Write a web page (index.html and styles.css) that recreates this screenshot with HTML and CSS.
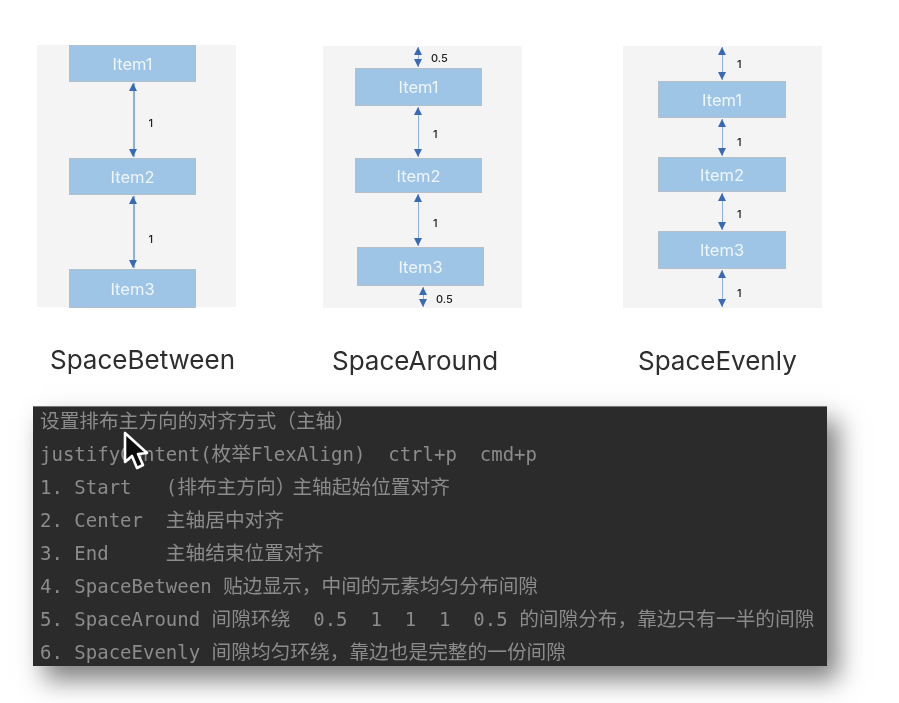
FILE: index.html
```html
<!DOCTYPE html>
<html lang="zh">
<head>
<meta charset="utf-8">
<title>justifyContent</title>
<link rel="stylesheet" href="styles.css">
</head>
<body>
<main class="page">
  <section class="diagrams">
    <figure class="col col-between">
      <div class="panel">
        <div class="item h37">Item1</div>
        <div class="gap h76"><span class="arrow"></span><span class="num shift-6">1</span></div>
        <div class="item h37">Item2</div>
        <div class="gap h74"><span class="arrow"></span><span class="num shift-14">1</span></div>
        <div class="item h39">Item3</div>
      </div>
      <figcaption class="title">SpaceBetween</figcaption>
    </figure>
    <figure class="col col-around">
      <div class="panel">
        <div class="gap h22"><span class="arrow"></span><span class="num half shift-2">0.5</span></div>
        <div class="item h38">Item1</div>
        <div class="gap h52"><span class="arrow"></span><span class="num shift-4">1</span></div>
        <div class="item h35">Item2</div>
        <div class="gap h54"><span class="arrow"></span><span class="num shift-6">1</span></div>
        <div class="item h39 nudged">Item3</div>
        <div class="gap h22 nudged-more"><span class="arrow"></span><span class="num half shift-4">0.5</span></div>
      </div>
      <figcaption class="title">SpaceAround</figcaption>
    </figure>
    <figure class="col col-evenly">
      <div class="panel">
        <div class="gap h35"><span class="arrow"></span><span class="num">1</span></div>
        <div class="item h37">Item1</div>
        <div class="gap h39"><span class="arrow"></span><span class="num shift-8">1</span></div>
        <div class="item h35">Item2</div>
        <div class="gap h39"><span class="arrow"></span><span class="num shift-4">1</span></div>
        <div class="item h38">Item3</div>
        <div class="gap h39"><span class="arrow"></span><span class="num shift-8">1</span></div>
      </div>
      <figcaption class="title">SpaceEvenly</figcaption>
    </figure>
  </section>

  <section class="code">
    <div class="line"><span class="zh">设置排布主方向的对齐方式（主轴）</span></div>
    <div class="line">justifyContent(<span class="zh">枚举</span>FlexAlign)  ctrl+p  cmd+p</div>
    <div class="line">1. Start   (<span class="zh">排布主方向<span class="tight">）</span>主轴起始位置对齐</span></div>
    <div class="line">2. Center  <span class="zh">主轴居中对齐</span></div>
    <div class="line">3. End     <span class="zh">主轴结束位置对齐</span></div>
    <div class="line">4. SpaceBetween <span class="zh">贴边显示，中间的元素均匀分布间隙</span></div>
    <div class="line">5. SpaceAround <span class="zh">间隙环绕</span>  0.5  1  1  1  0.5 <span class="zh">的间隙分布，靠边只有一半的间隙</span></div>
    <div class="line">6. SpaceEvenly <span class="zh">间隙均匀环绕，靠边也是完整的一份间隙</span></div>
    <svg class="cursor" viewBox="0 0 26 40" width="26" height="40" aria-hidden="true">
      <path d="M2 2 L2 31 L9 25 L14 37 L20 34 L15 23 L24 22 Z" fill="#0c0c0c" stroke="#fff" stroke-width="2.6" stroke-linejoin="round"/>
    </svg>
  </section>
</main>
</body>
</html>
```
FILE: styles.css
```css
html, body {
  margin: 0;
  background: #fff;
}

.page {
  width: 899px;
  height: 703px;
  overflow: hidden;
  box-sizing: border-box;
  padding: 45px 0 0 33px;
  filter: blur(0.5px);
}

.diagrams {
  display: flex;
  padding-left: 4px;
}

.col {
  margin: 0;
  width: 199px;
  flex: none;
}

.col-around {
  margin-left: 87px;
  padding-top: 1px;
}

.col-evenly {
  margin-left: 101px;
  padding-top: 1px;
}

.panel {
  display: flex;
  flex-direction: column;
  height: 262px;
  background: #f4f4f4;
}

.item {
  box-sizing: border-box;
  width: 127px;
  margin-left: 32px;
  display: flex;
  align-items: center;
  justify-content: center;
  flex: none;
  background: #9fc5e6;
  border: 1px solid #b6bfc6;
  color: #eef6fc;
  font: 16.5px "Inter", "Noto Sans", sans-serif;
}

.col-evenly .item {
  margin-left: 35px;
  width: 128px;
}

.item.nudged {
  margin-left: 34px;
}

.h22 { height: 22px; }
.h35 { height: 35px; }
.h37 { height: 37px; }
.h38 { height: 38px; }
.h39 { height: 39px; }
.h52 { height: 52px; }
.h54 { height: 54px; }
.h74 { height: 74px; }
.h76 { height: 76px; }

.gap {
  display: flex;
  box-sizing: border-box;
  flex: none;
  padding: 1px 0 1px 96px;
}

.col-around .gap {
  padding-left: 94.5px;
}

.col-around .gap.nudged-more {
  padding-left: 99.5px;
}

.col-evenly .gap {
  padding-left: 98.5px;
}

.arrow {
  position: relative;
  flex: none;
  width: 1.5px;
  background: #8db0dc;
}

.arrow::before,
.arrow::after {
  content: "";
  position: absolute;
  left: -3.75px;
  border-left: 4.5px solid transparent;
  border-right: 4.5px solid transparent;
}

.arrow::before {
  top: 0;
  border-bottom: 8px solid #3a6ab4;
}

.arrow::after {
  bottom: 0;
  border-top: 8px solid #3a6ab4;
}

.num {
  align-self: center;
  margin-left: 14px;
  color: #222;
  font: 500 11px/14px "Inter", "Noto Sans", sans-serif;
}

.num.half {
  margin-left: 12px;
}

.shift-2 { margin-top: 2px; }
.shift-4 { margin-top: 4px; }
.shift-6 { margin-top: 6px; }
.shift-8 { margin-top: 8px; }
.shift-14 { margin-top: 14px; }

.title {
  margin: 35px 0 0 13px;
  height: 36px;
  white-space: nowrap;
  color: #2e2e2e;
  font: 26px/36px "Inter", "Noto Sans", sans-serif;
}

.col-around .title {
  margin-left: 9px;
}

.col-evenly .title {
  margin-left: 15px;
}

.code {
  position: relative;
  box-sizing: border-box;
  width: 794px;
  height: 260px;
  margin-top: 27px;
  padding: 0 0 0 7px;
  background: #2b2b2b;
  border-top: 1px solid #777;
  box-shadow: 11px 14px 24px rgba(0, 0, 0, 0.5);
  color: #8b8b8b;
  font: 19px/26px "DejaVu Sans Mono", "Liberation Mono", monospace;
}

.line {
  height: 33px;
  white-space: pre;
}

.zh {
  font-family: "Noto Sans CJK SC", sans-serif;
  font-size: 19.7px;
}

.tight {
  letter-spacing: -3px;
}

.cursor {
  position: absolute;
  left: 90px;
  top: 24px;
}
```
